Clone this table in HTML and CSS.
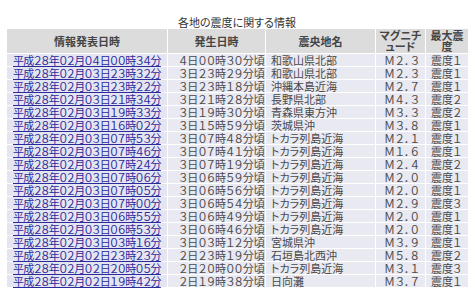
FILE: index.html
```html
<!DOCTYPE html>
<html lang="ja">
<head>
<meta charset="utf-8">
<link rel="stylesheet" href="styles.css">
</head>
<body>
<div class="wrap">
<div class="title">各地の震度に関する情報</div>
<table class="quake">
<thead>
<tr>
<th class="c1">情報発表日時</th>
<th class="c2">発生日時</th>
<th class="c3">震央地名</th>
<th class="c4">マグニチ<br>ュード</th>
<th class="c5">最大震<br>度</th>
</tr>
</thead>
<tbody>
<tr><td class="c1"><a href="#">平成２８年０２月０４日００時３４分</a></td><td class="c2">４日００時３０分頃</td><td class="c3">和歌山県北部</td><td class="c4">Ｍ２．３</td><td class="c5">震度１</td></tr>
<tr><td class="c1"><a href="#">平成２８年０２月０３日２３時３２分</a></td><td class="c2">３日２３時２９分頃</td><td class="c3">和歌山県北部</td><td class="c4">Ｍ２．３</td><td class="c5">震度１</td></tr>
<tr><td class="c1"><a href="#">平成２８年０２月０３日２３時２２分</a></td><td class="c2">３日２３時１８分頃</td><td class="c3">沖縄本島近海</td><td class="c4">Ｍ２．７</td><td class="c5">震度１</td></tr>
<tr><td class="c1"><a href="#">平成２８年０２月０３日２１時３４分</a></td><td class="c2">３日２１時２８分頃</td><td class="c3">長野県北部</td><td class="c4">Ｍ４．３</td><td class="c5">震度２</td></tr>
<tr><td class="c1"><a href="#">平成２８年０２月０３日１９時３３分</a></td><td class="c2">３日１９時３０分頃</td><td class="c3">青森県東方沖</td><td class="c4">Ｍ３．３</td><td class="c5">震度２</td></tr>
<tr><td class="c1"><a href="#">平成２８年０２月０３日１６時０２分</a></td><td class="c2">３日１５時５９分頃</td><td class="c3">茨城県沖</td><td class="c4">Ｍ３．８</td><td class="c5">震度１</td></tr>
<tr><td class="c1"><a href="#">平成２８年０２月０３日０７時５３分</a></td><td class="c2">３日０７時４８分頃</td><td class="c3">トカラ列島近海</td><td class="c4">Ｍ２．１</td><td class="c5">震度１</td></tr>
<tr><td class="c1"><a href="#">平成２８年０２月０３日０７時４６分</a></td><td class="c2">３日０７時４１分頃</td><td class="c3">トカラ列島近海</td><td class="c4">Ｍ１．６</td><td class="c5">震度１</td></tr>
<tr><td class="c1"><a href="#">平成２８年０２月０３日０７時２４分</a></td><td class="c2">３日０７時１９分頃</td><td class="c3">トカラ列島近海</td><td class="c4">Ｍ２．４</td><td class="c5">震度２</td></tr>
<tr><td class="c1"><a href="#">平成２８年０２月０３日０７時０６分</a></td><td class="c2">３日０６時５９分頃</td><td class="c3">トカラ列島近海</td><td class="c4">Ｍ２．０</td><td class="c5">震度１</td></tr>
<tr><td class="c1"><a href="#">平成２８年０２月０３日０７時０５分</a></td><td class="c2">３日０６時５６分頃</td><td class="c3">トカラ列島近海</td><td class="c4">Ｍ２．０</td><td class="c5">震度１</td></tr>
<tr><td class="c1"><a href="#">平成２８年０２月０３日０７時００分</a></td><td class="c2">３日０６時５４分頃</td><td class="c3">トカラ列島近海</td><td class="c4">Ｍ２．９</td><td class="c5">震度３</td></tr>
<tr><td class="c1"><a href="#">平成２８年０２月０３日０６時５５分</a></td><td class="c2">３日０６時４９分頃</td><td class="c3">トカラ列島近海</td><td class="c4">Ｍ２．０</td><td class="c5">震度１</td></tr>
<tr><td class="c1"><a href="#">平成２８年０２月０３日０６時５３分</a></td><td class="c2">３日０６時４６分頃</td><td class="c3">トカラ列島近海</td><td class="c4">Ｍ２．０</td><td class="c5">震度１</td></tr>
<tr><td class="c1"><a href="#">平成２８年０２月０３日０３時１６分</a></td><td class="c2">３日０３時１２分頃</td><td class="c3">宮城県沖</td><td class="c4">Ｍ３．９</td><td class="c5">震度１</td></tr>
<tr><td class="c1"><a href="#">平成２８年０２月０２日２３時２３分</a></td><td class="c2">２日２３時１９分頃</td><td class="c3">石垣島北西沖</td><td class="c4">Ｍ５．８</td><td class="c5">震度２</td></tr>
<tr><td class="c1"><a href="#">平成２８年０２月０２日２０時０５分</a></td><td class="c2">２日２０時００分頃</td><td class="c3">トカラ列島近海</td><td class="c4">Ｍ３．１</td><td class="c5">震度３</td></tr>
<tr><td class="c1"><a href="#">平成２８年０２月０２日１９時４２分</a></td><td class="c2">２日１９時３８分頃</td><td class="c3">日向灘</td><td class="c4">Ｍ３．７</td><td class="c5">震度１</td></tr>
</tbody>
</table>
</div>
</body>
</html>
```

FILE: styles.css
```css
html, body {
  margin: 0;
  padding: 0;
  background: #ffffff;
}
body {
  font-family: "Noto Sans CJK JP", "Noto Sans", sans-serif;
  font-size: 11px;
  color: #4a4a4a;
  font-feature-settings: "palt";
}
.wrap {
  padding: 16px 6px 0 6px;
}
.title {
  text-align: center;
  line-height: 12px;
  height: 12px;
  color: #333333;
}
.quake {
  width: 462px;
  border-collapse: separate;
  border-spacing: 1px;
  table-layout: fixed;
}
.quake th {
  background: #dcdcdc;
  font-weight: bold;
  line-height: 11px;
  padding: 1px 0;
  text-align: center;
  color: #444444;
}
.quake td {
  background: #e9e9f1;
  line-height: 12px;
  padding: 0 0 0 5px;
  white-space: nowrap;
}
.quake td.c1 {
  background: #e5e5f1;
  padding-left: 6px;
  letter-spacing: -0.75px;
}
.quake a {
  color: #2b2b9c;
  text-decoration: underline;
}
.c1 { width: 160px; }
.c2 { width: 97px; }
.c3 { width: 109px; }
.c4 { width: 49px; }
.c5 { width: 42px; }
.quake td.c2 { padding-left: 11px; }
.quake td.c4 { padding-left: 8px; letter-spacing: 0.6px; }
.quake td.c5 { padding-left: 5px; }
```
